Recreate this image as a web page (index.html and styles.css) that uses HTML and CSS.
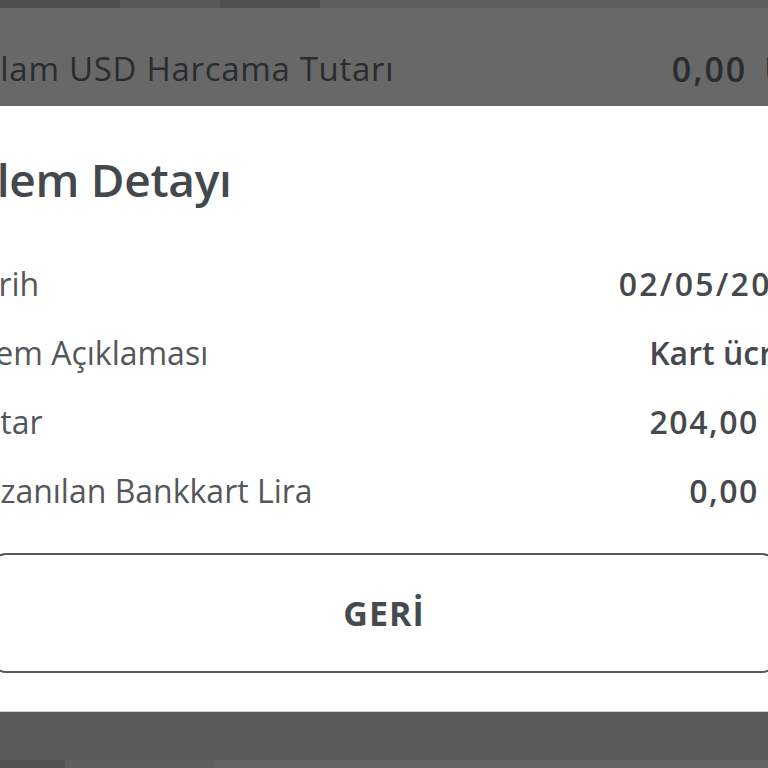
FILE: index.html
```html
<!DOCTYPE html>
<html lang="tr">
<head>
<meta charset="utf-8">
<title>İşlem Detayı</title>
<link rel="stylesheet" href="styles.css">
</head>
<body>
<div class="screen">
  <div class="strip strip-top">
    <span class="seg seg-a"></span><span class="seg seg-b"></span><span class="seg seg-c"></span><span class="seg seg-d"></span>
  </div>
  <div class="behind-row">
    <span class="behind-label">Toplam USD Harcama Tutarı</span>
    <span class="behind-value">0,00 USD</span>
  </div>
  <div class="dialog">
    <h1 class="dialog-title">İşlem Detayı</h1>
    <div class="rows">
      <div class="row"><span class="label">Tarih</span><span class="value num date">02/05/2023</span></div>
      <div class="row"><span class="label">İşlem Açıklaması</span><span class="value">Kart ücreti</span></div>
      <div class="row"><span class="label">Tutar</span><span class="value num">204,00 TL</span></div>
      <div class="row"><span class="label">Kazanılan Bankkart Lira</span><span class="value num">0,00 TL</span></div>
    </div>
    <button class="btn-back">GERİ</button>
  </div>
  <div class="behind-bottom"></div>
  <div class="strip strip-bottom">
    <span class="seg seg-e"></span><span class="seg seg-f"></span><span class="seg seg-g"></span>
  </div>
</div>
</body>
</html>
```
FILE: styles.css
```css
html, body {
  margin: 0;
  padding: 0;
  background: #5a5a5a;
  overflow: hidden;
}
.screen {
  width: 768px;
  height: 768px;
  overflow: hidden;
  font-family: "Open Sans", "Liberation Sans", sans-serif;
  display: flex;
  flex-direction: column;
}
.strip {
  display: flex;
  height: 8px;
  flex: none;
}
.seg { display: block; height: 100%; }
.seg-a { width: 120px; background: #4d4e4e; }
.seg-b { width: 100px; background: #585959; }
.seg-c { width: 100px; background: #4f5050; }
.seg-d { flex: 1; background: #5c5d5d; }
.seg-e { width: 65px; background: #525454; }
.seg-f { width: 150px; background: #5e6060; }
.seg-g { flex: 1; background: #626464; }

.behind-row {
  flex: none;
  height: 98px;
  box-sizing: border-box;
  padding-top: 39px;
  margin: 0 -71px 0 -60px;
  background: #686868;
  display: flex;
  justify-content: space-between;
  line-height: 44px;
  color: #2a2c2e;
  white-space: nowrap;
}
.behind-label {
  font-size: 33px;
  letter-spacing: 0.7px;
}
.behind-value {
  font-size: 34px;
  font-weight: 600;
  letter-spacing: 2px;
  word-spacing: 6px;
}

.dialog {
  flex: none;
  height: 606px;
  box-sizing: border-box;
  margin: 0 -45px 0 -37px;
  padding-top: 45px;
  background: #ffffff;
  border-bottom: 1px solid #cfcfcf;
  display: flex;
  flex-direction: column;
}
.dialog-title {
  margin: 0 0 0 -2px;
  font-size: 46px;
  line-height: 56px;
  font-weight: 600;
  letter-spacing: -0.3px;
  color: #43484c;
  white-space: nowrap;
}
.rows {
  margin-top: 42px;
  display: flex;
  flex-direction: column;
}
.row {
  height: 69px;
  display: flex;
  justify-content: space-between;
  font-size: 32px;
  line-height: 69px;
  white-space: nowrap;
}
.label { color: #53575b; font-weight: 400; }
.value { color: #45494d; font-weight: 600; }
.value.num { letter-spacing: 1.5px; word-spacing: 6px; }
.value.date { letter-spacing: 2.3px; }

.btn-back {
  margin: 28px 37px 0 29px;
  height: 120px;
  box-sizing: border-box;
  border: 2.5px solid #565a5e;
  border-radius: 14px;
  background: #ffffff;
  font-family: "Open Sans", "Liberation Sans", sans-serif;
  font-size: 34px;
  font-weight: 700;
  letter-spacing: 1px;
  color: #464b50;
  padding: 0;
}

.behind-bottom {
  flex: 1;
  background: #5a5a5a;
}
```
